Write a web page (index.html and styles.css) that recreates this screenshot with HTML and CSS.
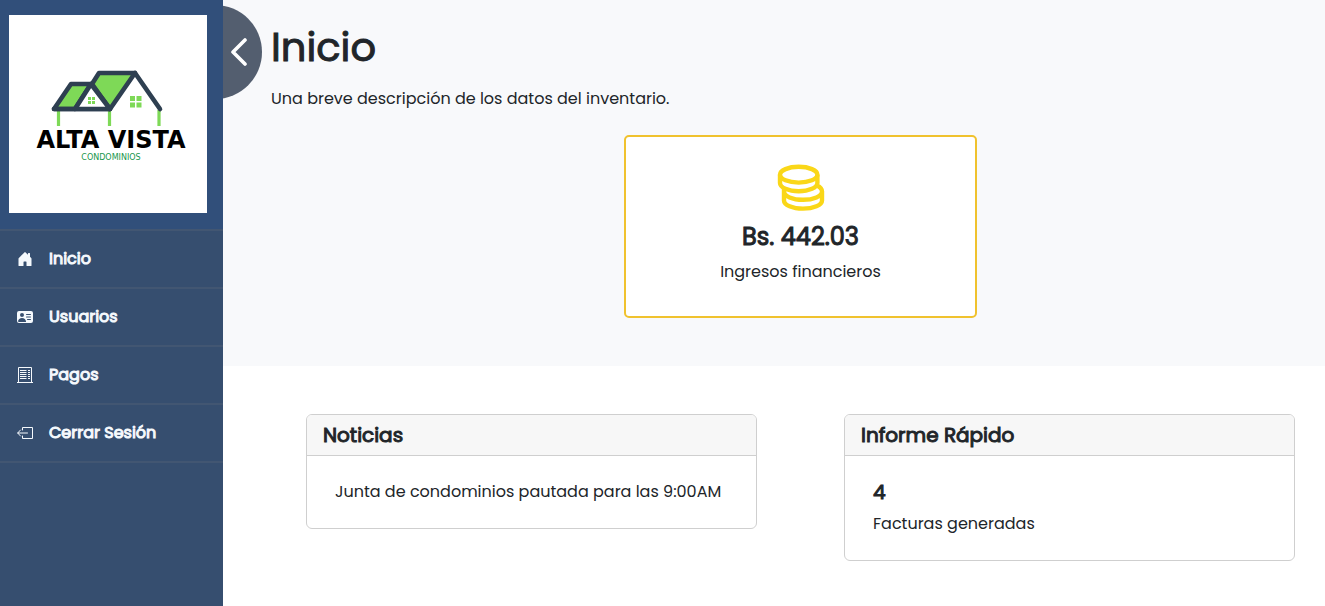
FILE: index.html
```html
<!DOCTYPE html>
<html lang="es">
<head>
<meta charset="utf-8">
<title>Alta Vista Condominios</title>
<link rel="stylesheet" href="styles.css">
</head>
<body>
<div class="app">
  <aside class="sidebar">
    <div class="brand">
      <svg class="logo" viewBox="0 0 198 198" role="img" aria-label="Alta Vista Condominios">
        <g stroke="#7ed957" stroke-width="3.2"><path d="M49.500 95v16M100.500 95v16M150 95v16"/></g>
        <g fill="#7ed957" stroke="#2e3f51" stroke-width="4.600" stroke-linejoin="round" stroke-linecap="round">
          <path d="M62 69H82L66 94H45Z"/>
          <path d="M90 58H126L101 94L83 69Z"/>
          <path d="M45 94H101M126 58L151 94" fill="none"/>
          <path d="M82 69L66 94H101Z" fill="#fff"/>
        </g>
        <path fill="#7ed957" d="M79 82h3v3h-3zM83 82h3v3h-3zM79 86h3v3h-3zM83 86h3v3h-3zM121 81h5v5h-5zM127.500 81h5v5h-5zM121 87.500h5v5h-5zM127.500 87.500h5v5h-5z"/>
        <text class="logo-name" x="102" y="133" text-anchor="middle">ALTA VISTA</text>
        <text class="logo-sub" x="102" y="145" text-anchor="middle">CONDOMINIOS</text>
      </svg>
    </div>
    <nav class="menu">
      <a href="#inicio"><svg viewBox="0 0 16 16" fill="currentColor"><path d="M6.500 14.500v-3.505c0-.245.25-.495.5-.495h2c.25 0 .5.250.5.500v3.500a.5.5 0 0 0 .5.500h4a.5.5 0 0 0 .5-.5v-7a.5.5 0 0 0-.146-.354L13 5.793V2.500a.5.5 0 0 0-.5-.5h-1a.5.5 0 0 0-.5.500v1.293L8.354 1.146a.5.5 0 0 0-.708 0l-6 6A.5.5 0 0 0 1.500 7.500v7a.5.5 0 0 0 .5.500h4a.5.5 0 0 0 .5-.5z"/></svg>Inicio</a>
      <a href="#usuarios"><svg viewBox="0 0 16 16" fill="currentColor"><path fill-rule="evenodd" d="M0 4a2 2 0 0 1 2-2h12a2 2 0 0 1 2 2v8a2 2 0 0 1-2 2H2a2 2 0 0 1-2-2zm9 1.500a.5.5 0 0 0 .5.500h4a.5.5 0 0 0 0-1h-4a.5.5 0 0 0-.5.500M9 8a.5.5 0 0 0 .5.500h4a.5.5 0 0 0 0-1h-4A.5.5 0 0 0 9 8m1 2.500a.5.5 0 0 0 .5.500h3a.5.5 0 0 0 0-1h-3a.5.5 0 0 0-.5.500m-1 2C9 10.567 7.210 9 5 9c-2.086 0-3.800 1.398-3.984 3.181A1 1 0 0 0 2 13h6.960q.04-.245.04-.5M7 6a2 2 0 1 0-4 0 2 2 0 0 0 4 0"/></svg>Usuarios</a>
      <a href="#pagos"><svg viewBox="0 0 16 16" fill="none" stroke="currentColor"><path d="M1.500 15V.5h13V15M0 15.500h16M3 3.500h6.500M3 5.500h6.500M3 7.500h6.500M3 9.500h6.500M3 11.500h6.500M11 3.500h2M11 5.500h2M11 7.500h2M11 9.500h2M11 11.500h2"/></svg>Pagos</a>
      <a href="#salir"><svg viewBox="0 0 16 16" fill="none" stroke="currentColor" stroke-linejoin="round" stroke-linecap="round"><path d="M5.500 5V2.500h10v11h-10V11M.8 8h9.700M3.500 5L.7 8l2.800 3"/></svg>Cerrar Sesión</a>
    </nav>
  </aside>
  <main class="content">
    <button class="toggle" type="button" aria-label="Ocultar menú"><svg viewBox="0 0 16 28" fill="none" stroke="#fff" stroke-width="3.600" stroke-linecap="round" stroke-linejoin="round"><path d="M14 2L2 14L14 26"/></svg></button>
    <section class="summary">
      <header class="intro">
        <h1>Inicio</h1>
        <p>Una breve descripción de los datos del inventario.</p>
      </header>
      <article class="income">
        <svg viewBox="1 0 48 48" fill="none" stroke="#fad718" stroke-width="4.400"><ellipse cx="22.700" cy="10.700" rx="18.700" ry="7.900"/><path d="M4 10.700V19c0 4.600 8.300 8.200 18.700 8.200S41.400 23.600 41.400 19v-8.300M8 24v3.600c0 4.600 8.500 8.200 19 8.200s19-3.600 19-8.200c0-2.700-1.800-4.500-5-6M8 27v9.400c0 4.600 8.500 8.200 19 8.200s19-3.600 19-8.200V27"/></svg>
        <h2>Bs. 442.03</h2>
        <p>Ingresos financieros</p>
      </article>
    </section>
    <section class="panels">
      <article class="card">
        <h3>Noticias</h3>
        <div class="card-body"><p>Junta de condominios pautada para las 9:00AM</p></div>
      </article>
      <article class="card">
        <h3>Informe Rápido</h3>
        <div class="card-body"><strong>4</strong><p>Facturas generadas</p></div>
      </article>
    </section>
  </main>
</div>
</body>
</html>
```
FILE: styles.css
```css
* { box-sizing: border-box; }
body { margin: 0; color: #212529; background: #fff; font: 16px/24px Poppins, Inter, sans-serif; }
h1, h2, h3, p { margin: 0; }
h1, h2, h3, strong, .menu a { font-weight: 400; -webkit-text-stroke: 1px currentColor; }
.app { display: flex; min-height: 100vh; }
.sidebar { flex: 0 0 223px; position: relative; z-index: 1; background: #364e6f; }
.brand { padding: 15px 16px 16px 9px; background: #314f7a; }
.logo { display: block; width: 100%; background: #fff; }
.logo-name { font: 700 24px "DejaVu Sans", sans-serif; fill: #000; }
.logo-sub { font: 400 8px "DejaVu Sans", sans-serif; fill: #17964b; }
.menu { border-top: 2px solid #425672; }
.menu a { display: flex; align-items: center; gap: 16px; height: 58px; padding: 0 17px; border-bottom: 2px solid #425672; color: #f5f9fd; text-decoration: none; }
.menu svg { width: 16px; height: 16px; }
.content { flex: 1; min-width: 0; position: relative; }
.toggle { position: absolute; left: -55px; top: 5px; width: 94px; height: 94px; padding: 0 15px 0 0; border: 0; border-radius: 50%; background: #535e6f; display: flex; align-items: center; justify-content: flex-end; }
.toggle svg { width: 16px; height: 28px; }
.summary { padding: 23px 30px 48px 83px; background: #f8f9fb; }
.intro { margin-left: -35px; }
h1 { margin-bottom: 16px; font-size: 40px; line-height: 48px; }
.income { width: 353px; max-width: 100%; margin: 24px auto 0; padding: 27px 16px 32px; border: 2px solid #f0c22e; border-radius: 5px; background: #fff; text-align: center; }
.income svg { display: block; width: 48px; height: 48px; margin: 0 auto; }
.income h2 { margin: 10px 0 8px; font-size: 24px; line-height: 30px; }
.panels { display: grid; grid-template-columns: 1fr 1fr; gap: 87px; align-items: start; padding: 48px 30px 45px 83px; }
.card { border: 1px solid #cfcfcf; border-radius: 6px; overflow: hidden; }
.card h3 { padding: 8px 16px; background: #f7f7f7; border-bottom: 1px solid #cfcfcf; font-size: 20px; line-height: 24px; }
.card-body { padding: 24px 28px; }
.card-body strong { display: block; margin-bottom: 8px; font-size: 20px; line-height: 24px; }
```
